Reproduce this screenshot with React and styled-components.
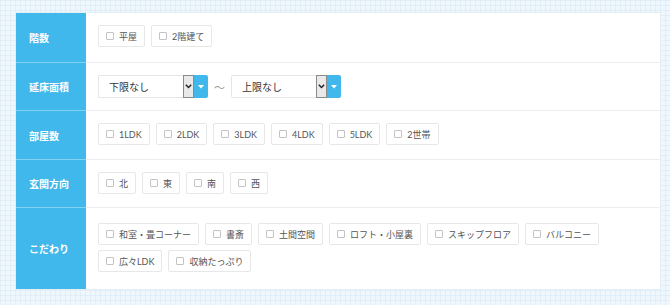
import React from "react";
import styled, { createGlobalStyle } from "styled-components";

const Global = createGlobalStyle`
  html, body { margin: 0; padding: 0; }
  body {
    width: 670px;
    height: 305px;
    overflow: hidden;
    font-family: Lato, "Noto Sans CJK JP", sans-serif;
    background-color: #f0f7fc;
    background-image:
      linear-gradient(rgba(196, 224, 242, 0.35) 1px, transparent 1px),
      linear-gradient(90deg, rgba(196, 224, 242, 0.35) 1px, transparent 1px);
    background-size: 5px 5px;
  }
`;

const Page = styled.div`
  padding: 13px 10px 0 16px;
`;

const Table = styled.div`
  width: 644px;
  background: #fff;
  box-shadow: 0 0 0 1px #e4eef5;
`;

const Row = styled.div`
  display: grid;
  grid-template-columns: 70px 1fr;
`;

const Label = styled.div`
  background: #40b8ec;
  color: #fff;
  font-family: "Noto Sans CJK JP", sans-serif;
  font-weight: 700;
  font-size: 10px;
  display: flex;
  align-items: center;
  padding-left: 13px;
  border-bottom: 1px solid ${(p) => (p.$last ? "#40b8ec" : "rgba(255,255,255,0.35)")};
`;

const Cell = styled.div`
  padding: ${(p) => p.$pad || "12px 12px 15px"};
  border-bottom: 1px solid ${(p) => (p.$last ? "transparent" : "#ededed")};
  display: flex;
  flex-wrap: wrap;
  align-items: center;
  align-content: flex-start;
  gap: 5px 6px;
`;

const Item = styled.label`
  display: inline-flex;
  align-items: center;
  height: 22px;
  box-sizing: border-box;
  padding: 0 7px 0 7px;
  border: 1px solid #e7e7e7;
  border-radius: 2px;
  background: #fff;
  color: #555;
  font-size: 9px;
  white-space: nowrap;
`;

const Box = styled.span`
  width: 8px;
  height: 8px;
  box-sizing: border-box;
  border: 1px solid #c4c4c4;
  border-radius: 1px;
  margin-right: 5px;
  flex: none;
`;

const Select = styled.div`
  display: flex;
  width: 110px;
  height: 23px;
`;

const Field = styled.div`
  flex: 1;
  box-sizing: border-box;
  border: 1px solid #e6e6e6;
  border-right: none;
  border-radius: 2px 0 0 2px;
  padding-left: 10px;
  display: flex;
  align-items: center;
  font-family: "Noto Sans CJK JP", sans-serif;
  font-size: 10px;
  color: #333;
`;

const NativeArrow = styled.div`
  width: 11px;
  box-sizing: border-box;
  background: #e9e9e9;
  border: 1px solid #8a8a8a;
  display: flex;
  align-items: center;
  justify-content: center;
`;

const BlueBtn = styled.div`
  width: 14px;
  background: #40b8ec;
  display: flex;
  align-items: center;
  justify-content: center;
  border-radius: 0 2px 2px 0;
`;

const Tilde = styled.span`
  color: #999;
  font-family: "Noto Sans CJK JP", sans-serif;
  font-size: 11px;
`;

function Check({ children }) {
  return (
    <Item>
      <Box />
      {children}
    </Item>
  );
}

function Dropdown({ value }) {
  return (
    <Select>
      <Field>{value}</Field>
      <NativeArrow>
        <svg width="7" height="5" viewBox="0 0 7 5">
          <path d="M0.8 0.8 L3.5 3.6 L6.2 0.8" fill="none" stroke="#222" strokeWidth="1.4" />
        </svg>
      </NativeArrow>
      <BlueBtn>
        <svg width="6" height="4" viewBox="0 0 6 4">
          <path d="M0 0 H6 L3 3.5 Z" fill="#fff" />
        </svg>
      </BlueBtn>
    </Select>
  );
}

const rows = [
  { label: "階数", items: ["平屋", "2階建て"], pad: "12px 12px 15px" },
  { label: "延床面積", select: true, pad: "12px 12px 12px" },
  { label: "部屋数", items: ["1LDK", "2LDK", "3LDK", "4LDK", "5LDK", "2世帯"], pad: "12px 12px 14px" },
  { label: "玄関方向", items: ["北", "東", "南", "西"], pad: "12px 12px 13px" },
  {
    label: "こだわり",
    items: ["和室・畳コーナー", "書斎", "土間空間", "ロフト・小屋裏", "スキップフロア", "バルコニー", "広々LDK", "収納たっぷり"],
    pad: "15px 12px 16px",
  },
];

export default function App() {
  return (
    <>
      <Global />
      <Page>
        <Table>
          {rows.map((r, i) => {
            const last = i === rows.length - 1;
            return (
              <Row key={r.label}>
                <Label $last={last}>{r.label}</Label>
                <Cell $pad={r.pad} $last={last}>
                  {r.select ? (
                    <>
                      <Dropdown value="下限なし" />
                      <Tilde>～</Tilde>
                      <Dropdown value="上限なし" />
                    </>
                  ) : (
                    r.items.map((t) => <Check key={t}>{t}</Check>)
                  )}
                </Cell>
              </Row>
            );
          })}
        </Table>
      </Page>
    </>
  );
}
